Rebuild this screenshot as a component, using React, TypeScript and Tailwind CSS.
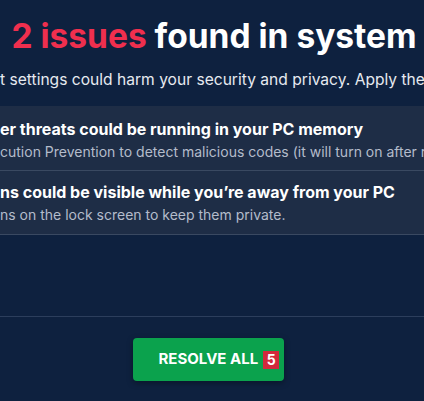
export default function App() {
  return (
    <div className="w-[424px] h-[401px] overflow-hidden bg-[#0e213f] font-['Inter','Liberation_Sans',sans-serif] text-white">
      <div className="pt-[14px] pl-[4px] text-center text-[33.5px] font-bold leading-[44px] whitespace-nowrap">
        <span className="text-[#ef2f4e]">2 issues</span> found in system
      </div>
      <div className="mt-[12px] whitespace-nowrap text-[15.6px] leading-[20px] text-[#e6eaf0]">
        t settings could harm your security and privacy. Apply the
      </div>

      <div className="mt-[16px] flex flex-col">
        <div className="h-[65px] bg-[#1e2d46] border-b border-[#3a4961] pt-[12px]">
          <div className="whitespace-nowrap text-[16px] font-bold leading-[22px]">
            er threats could be running in your PC memory
          </div>
          <div className="mt-[3px] whitespace-nowrap text-[14px] leading-[18px] text-[#b4bccb]">
            cution Prevention to detect malicious codes (it will turn on after res
          </div>
        </div>
        <div className="h-[64px] bg-[#1e2d46] border-b border-[#3a4961] pt-[10px]">
          <div className="whitespace-nowrap text-[16px] font-bold leading-[22px]">
            ns could be visible while you’re away from your PC
          </div>
          <div className="mt-[3px] whitespace-nowrap text-[14px] leading-[18px] text-[#b4bccb]">
            ns on the lock screen to keep them private.
          </div>
        </div>
      </div>

      <div className="mt-[81px] h-px bg-[#2c3e5c]" />

      <div className="mt-[21px] flex justify-center">
        <button className="ml-[-8px] flex h-[43px] w-[151px] items-center rounded-[4px] bg-[#0ba24d] pl-[26px] shadow-[0_2px_6px_rgba(0,0,0,0.35)]">
          <span className="text-[15px] font-bold text-white">RESOLVE ALL</span>
          <span className="ml-[5px] flex h-[18px] w-[16px] items-center justify-center bg-[#d3283c] text-[14px] font-bold text-white">5</span>
        </button>
      </div>
    </div>
  );
}
